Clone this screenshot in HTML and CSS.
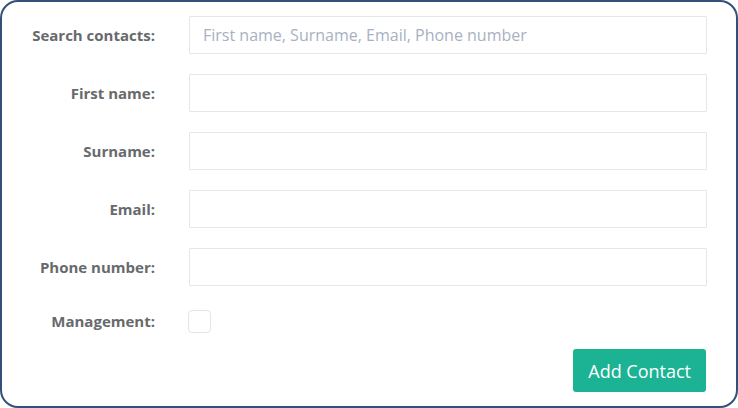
FILE: index.html
```html
<!DOCTYPE html>
<html lang="en">
<head>
<meta charset="utf-8">
<title>Contacts</title>
<link rel="stylesheet" href="styles.css">
</head>
<body>
<form class="card">
  <div class="grid">
    <label class="lbl" for="search">Search contacts:</label>
    <input class="field" id="search" type="text" placeholder="First name, Surname, Email, Phone number">
    <label class="lbl" for="fn">First name:</label>
    <input class="field" id="fn" type="text">
    <label class="lbl" for="sn">Surname:</label>
    <input class="field" id="sn" type="text">
    <label class="lbl" for="em">Email:</label>
    <input class="field" id="em" type="text">
    <label class="lbl" for="ph">Phone number:</label>
    <input class="field" id="ph" type="text">
    <label class="lbl" for="mg">Management:</label>
    <div class="check-row"><span class="check" id="mg"></span></div>
  </div>
  <div class="actions">
    <button class="btn" type="button">Add Contact</button>
  </div>
</form>
</body>
</html>
```
FILE: styles.css
```css
* { box-sizing: border-box; }
html, body { margin: 0; padding: 0; background: #ffffff; }
body { font-family: "Open Sans", "Liberation Sans", sans-serif; }
.card {
  width: 738px;
  height: 408px;
  border: 2px solid #34507a;
  border-radius: 18px;
  padding: 14px 29px 0 0;
  background: #fff;
}
.grid {
  display: grid;
  grid-template-columns: 153px 518px;
  grid-template-rows: repeat(5, 38px) 30px;
  column-gap: 34px;
  row-gap: 20px;
}
.lbl {
  font-size: 15px;
  font-weight: 700;
  color: #676a6c;
  text-align: right;
  display: flex;
  align-items: center;
  justify-content: flex-end;
}
.field {
  width: 518px;
  height: 38px;
  border: 1px solid #e5e6e7;
  border-radius: 1px;
  padding: 0 13px;
  font-family: inherit;
  font-size: 16px;
  color: #676a6c;
  outline: none;
  background: #fff;
}
.field::placeholder { color: #a8b1c2; }
.check-row { display: flex; align-items: center; }
.check {
  display: block;
  width: 23px;
  height: 23px;
  border: 1px solid #e3e4e6;
  border-radius: 4px;
  margin-left: -1px;
}
.actions {
  display: flex;
  justify-content: flex-end;
  padding-top: 13px;
  padding-right: 1px;
}
.btn {
  height: 43px;
  padding: 0 15px;
  border: none;
  border-radius: 3px;
  background: #1bb394;
  color: #fff;
  font-family: inherit;
  font-size: 18px;
  cursor: pointer;
}
```
